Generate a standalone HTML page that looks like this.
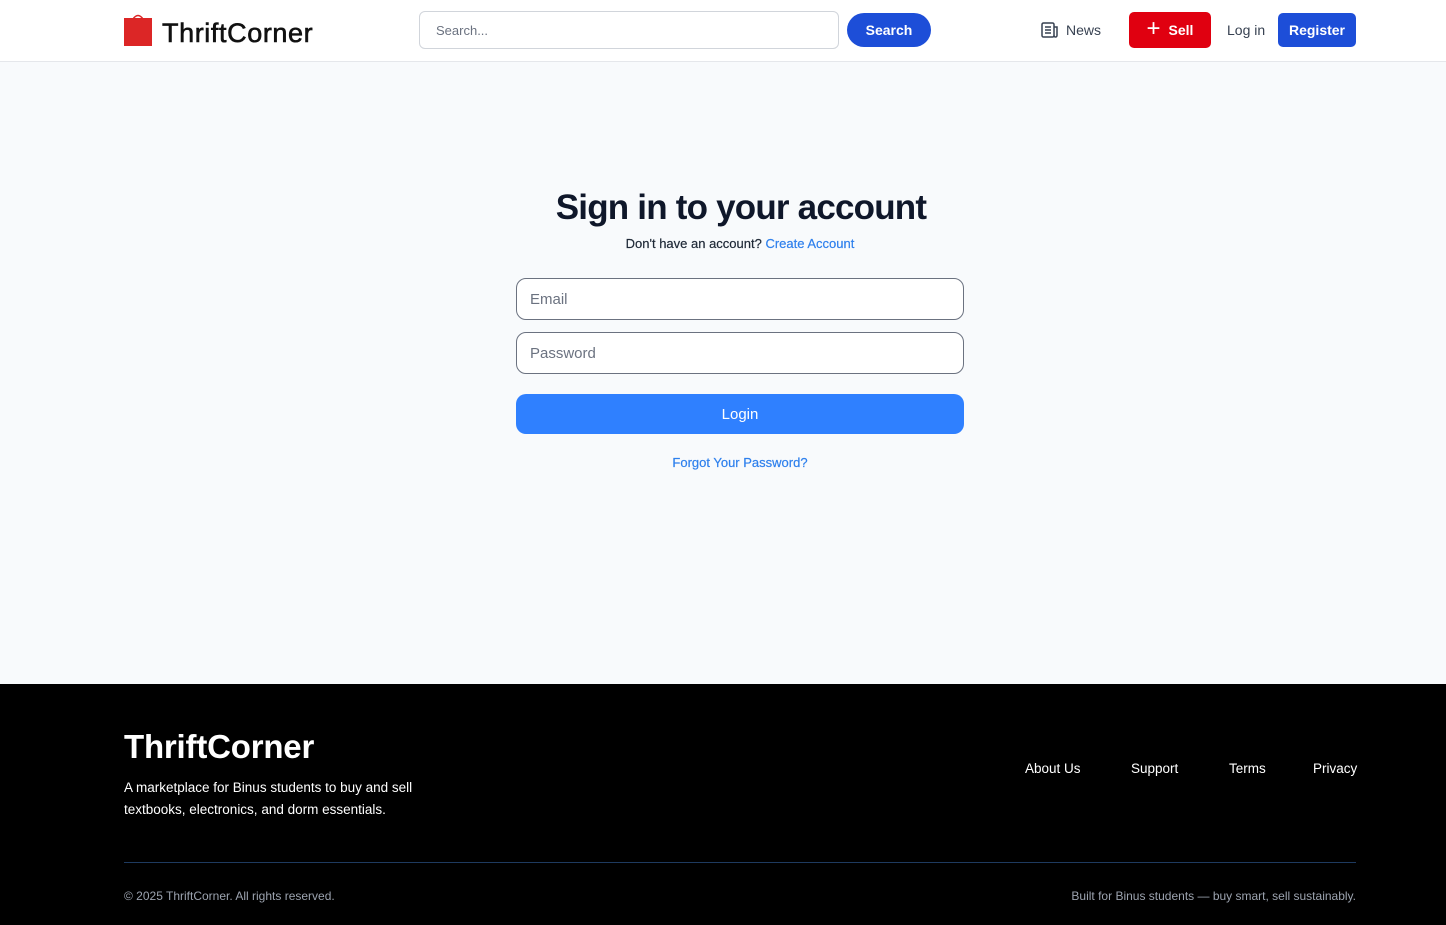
<!DOCTYPE html>
<html><head><style>
*{box-sizing:border-box;margin:0;padding:0}
body{width:1446px;height:925px;font-family:"Liberation Sans",sans-serif;background:#f8fafc;position:relative;overflow:hidden}
.hdr{position:absolute;left:0;top:0;width:1446px;height:62px;background:#fff;border-bottom:1px solid #e5e7eb}
.abs{position:absolute}
.btn{position:absolute;display:flex;align-items:center;justify-content:center;color:#fff;font-weight:bold;font-size:14px}
.inp{position:absolute;left:516px;width:448px;height:42px;border:1px solid #6b7280;border-radius:10px;background:#fff;font-size:15px;color:#6b7280;padding-left:13px;line-height:42px}
footer{position:absolute;left:0;top:684px;width:1446px;height:241px;background:#000;color:#fff}
</style></head><body>
<div class="hdr">
 <svg class="abs" style="left:124px;top:13px" width="28" height="34" viewBox="0 0 28 34"><path d="M9 6 Q14 -1 19 6" stroke="#dc2626" stroke-width="1.5" fill="none"/><rect x="0" y="5" width="28" height="28" fill="#dc2626"/></svg>
 <div class="abs" style="left:162px;top:18px;font-size:27px;color:#111;letter-spacing:0.6px;-webkit-text-stroke:0.6px #111">ThriftCorner</div>
 <div class="abs" style="left:419px;top:11px;width:420px;height:38px;border:1px solid #d1d5db;border-radius:6px;font-size:13px;color:#6b7280;padding-left:16px;line-height:38px">Search...</div>
 <div class="btn" style="left:847px;top:13px;width:84px;height:34px;background:#1d4ed8;border-radius:17px">Search</div>
 <svg class="abs" style="left:1041px;top:22px" width="17" height="16" viewBox="0 0 17 16" fill="none" stroke="#374151" stroke-width="1.5"><rect x="1" y="1" width="12" height="14" rx="1.5"/><path d="M13 5h3v8.5a1.5 1.5 0 0 1-3 0M4 5h6M4 8h6M4 11h6"/></svg>
 <div class="abs" style="left:1066px;top:22px;font-size:14px;color:#374151">News</div>
 <div class="btn" style="left:1129px;top:12px;width:82px;height:36px;background:#e00010;border-radius:5px"><span style="font-size:24px;font-weight:normal;margin-right:8px;margin-top:-3px">+</span>Sell</div>
 <div class="abs" style="left:1227px;top:22px;font-size:14px;color:#374151">Log in</div>
 <div class="btn" style="left:1278px;top:13px;width:78px;height:34px;background:#1d4ed8;border-radius:5px">Register</div>
</div>
<div class="abs" style="left:0;width:1482px;top:188px;text-align:center;font-size:35px;font-weight:bold;color:#0f172a;letter-spacing:-0.8px">Sign in to your account</div>
<div class="abs" style="left:0;width:1480px;top:236px;text-align:center;font-size:13px;color:#1f2937;-webkit-text-stroke:0.2px #1f2937">Don't have an account? <span style="color:#2f80ed;-webkit-text-stroke:0.2px #2f80ed">Create Account</span></div>
<div class="inp" style="top:278px">Email</div>
<div class="inp" style="top:332px">Password</div>
<div class="btn" style="left:516px;top:394px;width:448px;height:40px;background:#2f80ff;border-radius:10px;font-weight:normal;font-size:15px">Login</div>
<div class="abs" style="left:0;width:1480px;top:455px;text-align:center;font-size:13px;color:#2f80ed;-webkit-text-stroke:0.2px #2f80ed">Forgot Your Password?</div>
<footer>
 <div class="abs" style="left:124px;top:44px;font-size:33px;font-weight:bold;letter-spacing:-0.2px">ThriftCorner</div>
 <div class="abs" style="left:124px;top:93px;font-size:13.5px;line-height:22px">A marketplace for Binus students to buy and sell<br>textbooks, electronics, and dorm essentials.</div>
 <div class="abs" style="left:1025px;top:77px;font-size:13.5px">About Us</div>
 <div class="abs" style="left:1131px;top:77px;font-size:13.5px">Support</div>
 <div class="abs" style="left:1229px;top:77px;font-size:13.5px">Terms</div>
 <div class="abs" style="left:1313px;top:77px;font-size:13.5px">Privacy</div>
 <div class="abs" style="left:124px;top:178px;width:1232px;height:1px;background:#1e3a5f"></div>
 <div class="abs" style="left:124px;top:205px;font-size:12px;color:#9ca3af">© 2025 ThriftCorner. All rights reserved.</div>
 <div class="abs" style="right:90px;top:205px;font-size:12px;color:#9ca3af">Built for Binus students — buy smart, sell sustainably.</div>
</footer>
</body></html>
